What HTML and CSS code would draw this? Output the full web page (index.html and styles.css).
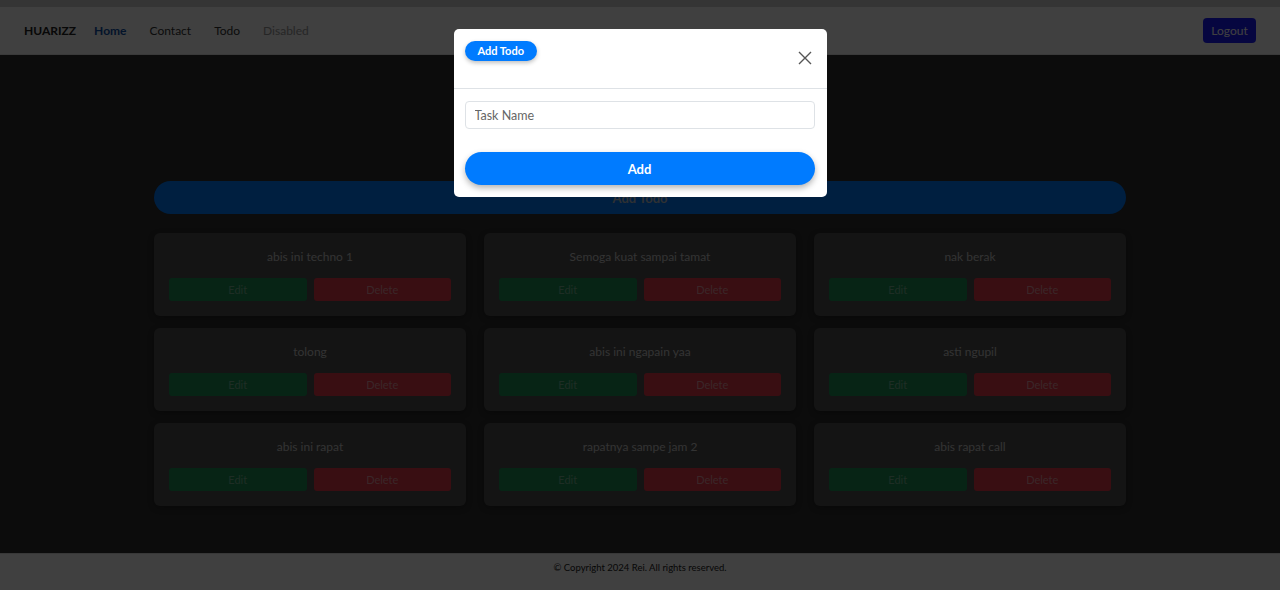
FILE: index.html
```html
<!DOCTYPE html>
<html lang="en">
<head>
<meta charset="utf-8">
<title>HUARIZZ Todo</title>
<link rel="stylesheet" href="styles.css">
</head>
<body>
<div class="page">
  <div class="topstrip"></div>
  <nav class="navbar">
    <div class="nav-left">
      <span class="brand">HUARIZZ</span>
      <a class="nav-link active">Home</a>
      <a class="nav-link">Contact</a>
      <a class="nav-link">Todo</a>
      <a class="nav-link disabled">Disabled</a>
    </div>
    <button class="logout">Logout</button>
  </nav>
  <main class="main">
    <div class="container">
      <button class="add-bar">Add Todo</button>
      <div class="grid">
        <div class="card"><div class="card-title">abis ini techno 1</div><div class="actions"><button class="btn edit">Edit</button><button class="btn delete">Delete</button></div></div>
        <div class="card"><div class="card-title">Semoga kuat sampai tamat</div><div class="actions"><button class="btn edit">Edit</button><button class="btn delete">Delete</button></div></div>
        <div class="card"><div class="card-title">nak berak</div><div class="actions"><button class="btn edit">Edit</button><button class="btn delete">Delete</button></div></div>
        <div class="card"><div class="card-title">tolong</div><div class="actions"><button class="btn edit">Edit</button><button class="btn delete">Delete</button></div></div>
        <div class="card"><div class="card-title">abis ini ngapain yaa</div><div class="actions"><button class="btn edit">Edit</button><button class="btn delete">Delete</button></div></div>
        <div class="card"><div class="card-title">asti ngupil</div><div class="actions"><button class="btn edit">Edit</button><button class="btn delete">Delete</button></div></div>
        <div class="card"><div class="card-title">abis ini rapat</div><div class="actions"><button class="btn edit">Edit</button><button class="btn delete">Delete</button></div></div>
        <div class="card"><div class="card-title">rapatnya sampe jam 2</div><div class="actions"><button class="btn edit">Edit</button><button class="btn delete">Delete</button></div></div>
        <div class="card"><div class="card-title">abis rapat call</div><div class="actions"><button class="btn edit">Edit</button><button class="btn delete">Delete</button></div></div>
      </div>
    </div>
  </main>
  <footer class="footer">© Copyright 2024 Rei. All rights reserved.</footer>
</div>

<div class="backdrop">
  <div class="modal">
    <div class="modal-header">
      <span class="pill">Add Todo</span>
      <button class="close" aria-label="Close">
        <svg width="14" height="14" viewBox="0 0 14 14"><path d="M1 1L13 13M13 1L1 13" stroke="#555" stroke-width="1.4" fill="none"/></svg>
      </button>
    </div>
    <div class="modal-body">
      <input class="task-input" type="text" placeholder="Task Name">
      <button class="add-btn">Add</button>
    </div>
  </div>
</div>
</body>
</html>
```

FILE: styles.css
```css
* { box-sizing: border-box; }
html, body { margin: 0; padding: 0; }
body {
  font-family: "Lato", "Open Sans", sans-serif;
  background: #303030;
  width: 1280px;
  height: 590px;
  overflow: hidden;
  position: relative;
}
.page {
  display: flex;
  flex-direction: column;
  height: 590px;
}
.topstrip { height: 7px; background: #d4d4d4; }
.navbar {
  height: 48px;
  background: #fdfdfd;
  display: flex;
  align-items: center;
  justify-content: space-between;
  padding: 0 24px;
  border-bottom: 1px solid #e6e6e6;
}
.nav-left { display: flex; align-items: center; gap: 23px; }
.brand { font-weight: 700; font-size: 12px; color: #222; margin-right: -5px; }
.nav-link { font-size: 12px; color: #333; }
.nav-link.active { color: #0d4fa8; font-weight: 700; }
.nav-link.disabled { color: #999; }
.logout {
  background: #1a1aff;
  color: #fff;
  border: none;
  border-radius: 4px;
  font-family: inherit;
  font-size: 12px;
  height: 25px;
  width: 53px;
  padding: 0;
}
.main {
  flex: 1;
  background: #303030;
}
.container {
  width: 972px;
  margin: 0 auto;
  padding-top: 126px;
}
.add-bar {
  display: block;
  width: 100%;
  height: 33px;
  border: none;
  border-radius: 17px;
  background: #007bff;
  color: #b8c2cc;
  font-family: inherit;
  font-weight: 700;
  font-size: 13px;
}
.grid {
  margin-top: 19px;
  display: grid;
  grid-template-columns: repeat(3, 1fr);
  column-gap: 18px;
  row-gap: 12px;
}
.card {
  background: #505050;
  border-radius: 6px;
  padding: 15px 15px 15px;
  box-shadow: 0 2px 6px rgba(0,0,0,0.3);
}
.card-title {
  text-align: center;
  color: #cccccc;
  font-size: 12px;
  line-height: 18px;
}
.actions {
  margin-top: 12px;
  display: flex;
  gap: 7px;
}
.btn {
  flex: 1;
  height: 23px;
  border: none;
  border-radius: 3px;
  font-family: inherit;
  font-size: 11px;
}
.btn.edit { background: #1d9055; color: #7ab594; }
.btn.delete { background: #e33848; color: #e89aa2; }
.footer {
  height: 37px;
  background: #fdfdfd;
  border-top: 1px solid #e0e0e0;
  display: flex;
  align-items: flex-start;
  justify-content: center;
  padding-top: 8px;
  font-size: 9.5px;
  color: #222;
}
.backdrop {
  position: absolute;
  inset: 0;
  background: rgba(0, 0, 0, 0.75);
}
.modal {
  width: 373px;
  margin: 29px auto 0;
  background: #fff;
  border-radius: 5px;
}
.modal-header {
  height: 60px;
  border-bottom: 1px solid #dee2e6;
  padding: 12px 11px 0 11px;
  display: flex;
  justify-content: space-between;
  align-items: flex-start;
}
.pill {
  display: inline-block;
  background: #007bff;
  color: #fff;
  font-weight: 700;
  font-size: 11px;
  line-height: 20px;
  padding: 0 13px;
  border-radius: 10px;
  box-shadow: 0 2px 4px rgba(0,0,0,0.25);
}
.close {
  background: none;
  border: none;
  padding: 0;
  margin-top: 10px;
  margin-right: 4px;
  width: 14px;
  height: 14px;
  display: flex;
}
.modal-body {
  padding: 12px 12px 12px 11px;
}
.task-input {
  display: block;
  width: 100%;
  height: 28px;
  border: 1px solid #dee2e6;
  border-radius: 4px;
  padding: 0 9px;
  font-family: inherit;
  font-size: 12.5px;
}
.task-input::placeholder { color: #666; }
.add-btn {
  display: block;
  width: 100%;
  margin-top: 23px;
  height: 33px;
  border: none;
  border-radius: 17px;
  background: #007bff;
  color: #fff;
  font-family: inherit;
  font-weight: 700;
  font-size: 13px;
  box-shadow: 0 3px 6px rgba(0,0,0,0.3);
}
```
